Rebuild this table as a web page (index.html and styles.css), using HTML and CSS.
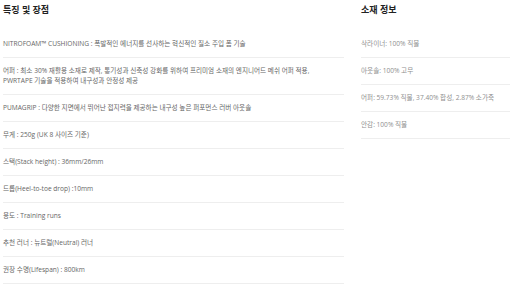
FILE: index.html
```html
<!DOCTYPE html>
<html lang="ko">
<head>
<meta charset="utf-8">
<title>특징 및 장점</title>
<link rel="stylesheet" href="styles.css">
</head>
<body>
<div class="page">
  <section class="features">
    <h2 class="title">특징 및 장점</h2>
    <ul class="list">
      <li>NITROFOAM™ CUSHIONING : 폭발적인 에너지를 선사하는 혁신적인 질소 주입 폼 기술</li>
      <li>어퍼 : 최소 30% 재활용 소재로 제작, 통기성과 신축성 강화를 위하여 프리미엄 소재의 엔지니어드 메쉬 어퍼 적용,<br>PWRTAPE 기술을 적용하여 내구성과 안정성 제공</li>
      <li>PUMAGRIP : 다양한 지면에서 뛰어난 접지력을 제공하는 내구성 높은 퍼포먼스 러버 아웃솔</li>
      <li>무게 : 250g (UK 8 사이즈 기준)</li>
      <li>스택(Stack height) : 36mm/26mm</li>
      <li>드롭(Heel-to-toe drop) :10mm</li>
      <li>용도 : Training runs</li>
      <li>추천 러너 : 뉴트럴(Neutral) 러너</li>
      <li>권장 수명(Lifespan) : 800km</li>
    </ul>
  </section>
  <section class="materials">
    <h2 class="title">소재 정보</h2>
    <ul class="list list-light">
      <li>삭라이너: 100% 직물</li>
      <li>아웃솔: 100% 고무</li>
      <li>어퍼: 59.73% 직물, 37.40% 합성, 2.87% 소가죽</li>
      <li>안감: 100% 직물</li>
    </ul>
  </section>
</div>
</body>
</html>
```
FILE: styles.css
```css
html, body {
  margin: 0;
  padding: 0;
  background: #ffffff;
  overflow: hidden;
}

body {
  font-family: "Open Sans", "Noto Sans CJK KR", sans-serif;
  color: #666666;
}

.page {
  display: flex;
  gap: 17px;
  padding: 3px 0 0 3px;
}

.features {
  width: 341px;
  flex: none;
}

.materials {
  flex: 1;
  min-width: 0;
}

.title {
  margin: 0 0 14px;
  font-size: 9px;
  line-height: 14px;
  font-weight: 700;
  color: #222222;
}

.list {
  list-style: none;
  margin: 0;
  padding: 0;
}

.list li {
  font-size: 6.6px;
  line-height: 10px;
  padding: 8px 0;
  border-bottom: 1px solid #eeeeee;
  white-space: nowrap;
}

.list-light li {
  color: #8f8f8f;
}
```
